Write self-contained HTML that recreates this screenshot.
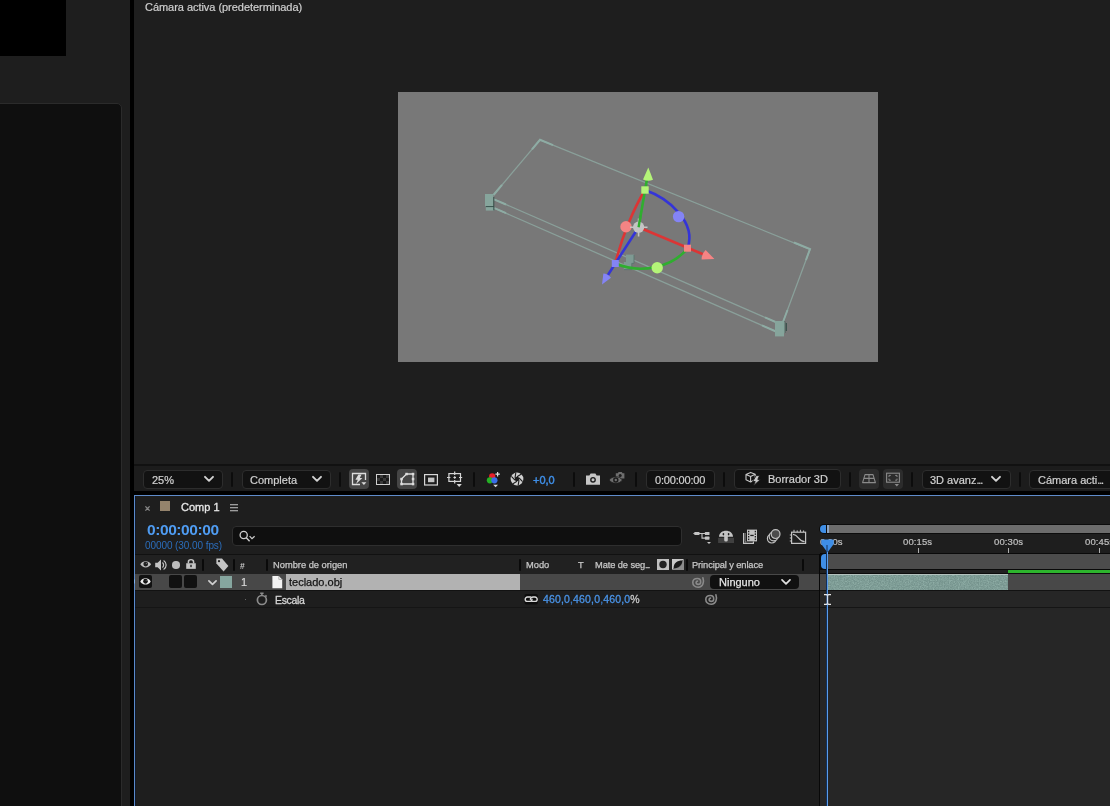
<!DOCTYPE html>
<html lang="es">
<head>
<meta charset="utf-8">
<title>Comp 1</title>
<style>
*{box-sizing:border-box;margin:0;padding:0}
html,body{width:1110px;height:806px;overflow:hidden;background:#1e1e1e}
body{position:relative;font-family:"Liberation Sans",sans-serif;font-size:11px;color:#c8c8c8;-webkit-font-smoothing:antialiased}
.abs{position:absolute}
.t{position:absolute;white-space:nowrap;line-height:1;transform-origin:0 0;will-change:transform}
.sep{position:absolute;width:2px;background:#0c0c0c;border-radius:1px}
.dd{position:absolute;background:#121212;border:1px solid #2d2d2d;border-radius:4px}
svg{position:absolute;overflow:visible}
.tb{font-size:11px;color:#d2d2d2;-webkit-text-stroke:0.2px #d2d2d2}
.dots{letter-spacing:-1.2px}
.hd{font-size:9.3px;color:#c8c8c8;letter-spacing:0;-webkit-text-stroke:0.25px #c8c8c8}
.rl{font-size:9.5px;letter-spacing:0.1px;color:#c0c0c0;-webkit-text-stroke:0.2px #c0c0c0}
</style>
</head>
<body>

<!-- LEFT COLUMN -->
<div class="abs" style="left:0;top:0;width:66px;height:56px;background:#000"></div>
<div class="abs" style="left:-5px;top:103px;width:127px;height:720px;background:#0f0f0f;border:1px solid #2b2b2b;border-radius:5px"></div>
<div class="abs" style="left:130px;top:0;width:4px;height:806px;background:#000"></div>

<!-- VIEWER -->
<div class="t" id="vtitle" style="left:145px;top:2px;font-size:11px;letter-spacing:-0.04px;color:#d0d0d0;-webkit-text-stroke:0.2px #d0d0d0">Cámara activa (predeterminada)</div>
<div class="abs" style="left:398px;top:92px;width:480px;height:270px;background:#787878"></div>

<!--VIEWER-SVG-->
<svg style="left:398px;top:92px" width="480" height="270" viewBox="398 92 480 270">
<!-- bounding box -->
<g fill="none" stroke="#92b0a8" stroke-width="1.3" stroke-opacity="0.7">
<path d="M540 139.8 L810 249.3 L783 322"/>
<path d="M540 139.8 L493.5 195"/>
<path d="M494 199.3 L779 323.5"/>
<path d="M494.5 208.2 L776 331.5"/>
</g>
<g fill="none" stroke="#8eaca4" stroke-width="2" stroke-linecap="butt">
<path d="M553 145.1 L540 139.8 L532 149.4"/>
<path d="M502 184.8 L493.5 195"/>
<path d="M494 199.3 L506 204.5"/>
<path d="M494.5 208.2 L506 213.2"/>
<path d="M794 242.5 L810 249 L806 260"/>
<path d="M787.5 310 L783 322"/>
<path d="M765 317.4 L779 323.5"/>
<path d="M762 325.4 L776 331.5"/>
</g>
<!-- handles -->
<rect x="485" y="194" width="8.4" height="12.4" fill="#86a59c"/>
<rect x="485.8" y="206.4" width="8.4" height="4.2" fill="#86a59c"/>
<path d="M485.8 206.6 H493.8 M493.8 197 V210.4" stroke="#2f4a44" stroke-width="0.9" fill="none"/>
<rect x="775" y="321" width="9" height="15.4" fill="#86a59c"/>
<path d="M784.8 321.6 V333 M786.3 323 V331" stroke="#2f4a44" stroke-width="1" fill="none"/>
<rect x="783.6" y="322" width="1" height="11" fill="#86a59c"/>
<rect x="626" y="254.6" width="8" height="8.8" fill="#7f9a93"/>
<rect x="623.8" y="262" width="8" height="7.6" fill="#7f9a93"/>
<path d="M634 255 V263.4 H631.8 V269.6 H624" fill="none" stroke="#5a746e" stroke-width="0.9"/>

<!-- gizmo arcs -->
<g fill="none" stroke-width="2.6" stroke-linecap="round">
<path d="M645 190 C634 208 622 236 615.3 263.5" stroke="#dc3535"/>
<path d="M645 190 C668 198 697 222 687.5 248.2" stroke="#3434d8"/>
<path d="M615.3 263.5 C640 274 672 268 687.5 248.2" stroke="#2fae2f"/>
<!-- axes -->
<path d="M638.6 227.2 L706 255.5" stroke="#dc3535"/>
<path d="M638.6 227.2 L647.2 178" stroke="#2fae2f"/>
<path d="M638.6 227.2 L606 278" stroke="#3434d8"/>
</g>
<!-- arrow heads -->
<path d="M648.3 167.6 L653 179.8 Q648 182 643 179.4 Z" fill="#b4f478"/>
<path d="M714.4 259 L701.6 259.4 Q701.6 254 705.6 250 Z" fill="#f58484"/>
<path d="M602 284.4 L603.4 273.6 Q607.4 273.6 611 277.8 Z" fill="#8484f5"/>
<!-- squares -->
<rect x="641.3" y="186.3" width="7.4" height="7.4" fill="#b4f478"/>
<rect x="684" y="244.7" width="7" height="7" fill="#f58484"/>
<rect x="611.8" y="260" width="7" height="7" fill="#8484f5"/>
<!-- circles -->
<circle cx="626" cy="226.8" r="5.7" fill="#f58484"/>
<circle cx="678.6" cy="216.6" r="5.7" fill="#8484f5"/>
<circle cx="657.2" cy="267.8" r="5.7" fill="#b4f478"/>
<!-- anchor -->
<circle cx="638.6" cy="227.2" r="5.6" fill="#c4c4c4"/>
<path d="M638.6 218.5 V236.5 M630 227.2 H647.5" stroke="#c4c4c4" stroke-width="1.6"/>
<path d="M638.6 227.2 L640.4 216" stroke="#2fae2f" stroke-width="2.4"/>
</svg>
<!--/VIEWER-SVG-->

<!-- VIEWER TOOLBAR -->
<div class="abs" style="left:134px;top:464px;width:976px;height:2px;background:#111"></div>
<div class="abs" style="left:134px;top:466px;width:976px;height:25px;background:#1c1c1c"></div>
<div class="abs" style="left:134px;top:490.5px;width:976px;height:4.5px;background:#000"></div>
<!--TOOLBAR-->
<div class="dd" style="left:143px;top:470px;width:80px;height:19px"></div>
<div class="t tb" id="t25" style="left:152px;top:474.7px">25%</div>
<svg style="left:204px;top:476px" width="10" height="6" viewBox="0 0 10 6"><path d="M1 0.8 L5 4.8 L9 0.8" fill="none" stroke="#d4d4d4" stroke-width="1.9" stroke-linecap="round" stroke-linejoin="round"/></svg>
<div class="sep" style="left:231px;top:472px;height:15px"></div>
<div class="dd" style="left:242px;top:470px;width:89px;height:19px"></div>
<div class="t tb" id="tcomp" style="left:250px;top:474.7px">Completa</div>
<svg style="left:312px;top:476px" width="10" height="6" viewBox="0 0 10 6"><path d="M1 0.8 L5 4.8 L9 0.8" fill="none" stroke="#d4d4d4" stroke-width="1.9" stroke-linecap="round" stroke-linejoin="round"/></svg>
<div class="sep" style="left:339px;top:472px;height:15px"></div>

<!-- fast preview -->
<div class="abs" style="left:349px;top:469px;width:20px;height:20px;background:#454545;border-radius:4px"></div>
<svg style="left:349px;top:469px" width="20" height="20" viewBox="0 0 20 20"><path d="M16.5 11 V4.5 H3.5 V15.5 H11" fill="none" stroke="#dcdcdc" stroke-width="1.3"/><path d="M9.4 5.6 H12.6 L10.8 9 H13.4 L7 15 L8.8 10.8 H6.4 Z" fill="#dcdcdc"/><path d="M12.4 13.2 H17.4 L14.9 16 Z" fill="#dcdcdc"/></svg>
<!-- transparency grid -->
<svg style="left:376px;top:474px" width="14" height="11" viewBox="0 0 14 11"><rect x="0.5" y="0.5" width="13" height="10" fill="#3a3a3a" stroke="#d0d0d0" stroke-width="1"/><g fill="#1a1a1a"><rect x="1" y="1" width="3" height="3"/><rect x="7" y="1" width="3" height="3"/><rect x="4" y="4" width="3" height="3"/><rect x="10" y="4" width="3" height="3"/><rect x="1" y="7" width="3" height="3"/><rect x="7" y="7" width="3" height="3"/></g></svg>
<!-- mask path -->
<div class="abs" style="left:397px;top:469px;width:20px;height:20px;background:#454545;border-radius:4px"></div>
<svg style="left:397px;top:469px" width="20" height="20" viewBox="0 0 20 20"><path d="M9.5 5 H16 V15 H4.5 V10 Z" fill="none" stroke="#dcdcdc" stroke-width="1.3" stroke-linejoin="round"/><g fill="#dcdcdc"><rect x="8.3" y="3.8" width="2.5" height="2.5"/><rect x="14.8" y="3.8" width="2.5" height="2.5"/><rect x="14.8" y="8.8" width="2.5" height="2.5"/><rect x="14.8" y="13.8" width="2.5" height="2.5"/><rect x="3.3" y="13.8" width="2.5" height="2.5"/><rect x="3.3" y="8.8" width="2.5" height="2.5"/></g></svg>
<!-- region of interest -->
<svg style="left:424px;top:474px" width="14" height="12" viewBox="0 0 14 12"><rect x="0.6" y="0.6" width="12.8" height="10.4" fill="none" stroke="#d6d6d6" stroke-width="1.2"/><rect x="4" y="3.6" width="6.4" height="4.6" fill="#c4c4c4"/></svg>
<!-- grid & guides -->
<svg style="left:446px;top:471px" width="17" height="17" viewBox="0 0 17 17"><rect x="2.9" y="2.6" width="11.6" height="7.8" fill="none" stroke="#d6d6d6" stroke-width="1.2"/><path d="M8.7 0.4 V4 M8.7 9 V12.4 M1 6.5 H4.4 M13 6.5 H16.2 M7.4 6.5 H10 M8.7 5.2 V7.8" stroke="#d6d6d6" stroke-width="1.2" fill="none"/><path d="M10.6 13 H15.8 L13.2 16 Z" fill="#d6d6d6"/></svg>
<div class="sep" style="left:473px;top:472px;height:15px"></div>

<!-- RGB channels -->
<svg style="left:486px;top:471px" width="16" height="17" viewBox="0 0 16 17"><circle cx="6.2" cy="5.4" r="3.1" fill="#e8202a"/><circle cx="3.9" cy="9.3" r="3.1" fill="#25b025"/><circle cx="8.4" cy="9.3" r="3.1" fill="#3a6ee8"/><path d="M11.6 1 V5.4 M9.4 3.2 H13.8" stroke="#e0e0e0" stroke-width="1.2"/><path d="M7.2 13.7 H12 L9.6 16.2 Z" fill="#d6d6d6"/></svg>
<!-- aperture -->
<svg style="left:510px;top:472px" width="14" height="14" viewBox="0 0 14 14"><circle cx="7" cy="7" r="6.4" fill="#cfcfcf"/><circle cx="7" cy="7" r="2.3" fill="#1c1c1c"/><g stroke="#1c1c1c" stroke-width="1.1"><path d="M7 4.7 L11.5 2"/><path d="M9 5.85 L12.6 9.6"/><path d="M9 8.15 L8.2 13.2"/><path d="M7 9.3 L2.5 12"/><path d="M5 8.15 L1.4 4.4"/><path d="M5 5.85 L5.8 0.8"/></g></svg>
<div class="t" id="tplus" style="left:533px;top:474.7px;color:#3f8ee6;font-size:11px;-webkit-text-stroke:0.45px #3f8ee6">+0,0</div>
<div class="sep" style="left:573px;top:472px;height:15px"></div>

<!-- camera snapshot -->
<svg style="left:586px;top:473px" width="14" height="12" viewBox="0 0 14 12"><path d="M0 2.6 H3.4 L4.6 0.6 H9.4 L10.6 2.6 H14 V11.8 H0 Z" fill="#c6c6c6"/><circle cx="7" cy="6.8" r="2.9" fill="#1c1c1c"/><circle cx="7" cy="6.8" r="1.5" fill="#c6c6c6"/></svg>
<!-- show snapshot -->
<svg style="left:609px;top:471px" width="16" height="15" viewBox="0 0 16 15"><path d="M6.8 2.2 H8.8 L9.6 1 H12.8 L13.6 2.2 H15.4 V7.6 H6.8 Z" fill="#6e6e6e"/><circle cx="11.2" cy="4.6" r="1.5" fill="#1c1c1c"/><path d="M0.2 9 C3 4.6 10.6 4.6 13.4 9 C10.6 13.4 3 13.4 0.2 9 Z" fill="#6e6e6e" stroke="#1c1c1c" stroke-width="0.8"/><circle cx="6.8" cy="9" r="2.7" fill="#1c1c1c"/><circle cx="6.8" cy="9" r="1.2" fill="#6e6e6e"/></svg>
<div class="sep" style="left:635px;top:472px;height:15px"></div>

<div class="dd" style="left:646px;top:470px;width:69px;height:19px"></div>
<div class="t tb" id="ttime" style="letter-spacing:-0.18px;left:655px;top:474.7px">0:00:00:00</div>
<div class="sep" style="left:723px;top:472px;height:15px"></div>

<div class="dd" style="left:733.5px;top:469px;width:107px;height:19.6px"></div>
<svg style="left:745px;top:471px" width="17" height="16" viewBox="0 0 17 16"><path d="M5.6 1.4 L10.2 3.2 V8.4 L5.6 11 L1 8.8 V3.4 Z M1 3.4 L5.6 5.4 L10.2 3.2 M5.6 5.4 V11" fill="none" stroke="#c8c8c8" stroke-width="1.1" stroke-linejoin="round"/><path d="M11.2 4.6 H14.6 L12.8 8.4 H15.6 L8.2 15 L10.2 10.6 H7.6 Z" fill="#c8c8c8" stroke="#121212" stroke-width="0.9"/></svg>
<div class="t tb" id="tborr" style="left:768px;top:474.1px">Borrador 3D</div>
<div class="sep" style="left:849px;top:472px;height:15px"></div>

<div class="abs" style="left:859px;top:469px;width:20px;height:20px;background:#2c2c2c;border-radius:4px"></div>
<svg style="left:859px;top:469px" width="20" height="20" viewBox="0 0 20 20"><path d="M6 5.6 H14 L16.4 13.6 H3.6 Z M10 5.6 V13.6 M4.8 9.4 H15.2" fill="none" stroke="#8a8a8a" stroke-width="1.1" stroke-linejoin="round"/></svg>
<div class="abs" style="left:883px;top:469px;width:20px;height:20px;background:#2c2c2c;border-radius:4px"></div>
<svg style="left:883px;top:469px" width="20" height="20" viewBox="0 0 20 20"><rect x="3.6" y="4.2" width="12.8" height="9" fill="none" stroke="#8a8a8a" stroke-width="1.1"/><path d="M6 8 V6.4 H7.8 M12.2 6.4 H14 V8 M14 9.6 V11.2 H12.2 M7.8 11.2 H6 V9.6" fill="none" stroke="#8a8a8a" stroke-width="1"/><path d="M11.6 15 H16 L13.8 17.4 Z" fill="#8a8a8a"/></svg>
<div class="sep" style="left:911px;top:472px;height:15px"></div>

<div class="dd" style="left:922px;top:470px;width:89px;height:19px"></div>
<div class="t tb" id="t3d" style="left:930px;top:474.7px">3D avanz<span class="dots">...</span></div>
<svg style="left:991px;top:476px" width="10" height="6" viewBox="0 0 10 6"><path d="M1 0.8 L5 4.8 L9 0.8" fill="none" stroke="#d4d4d4" stroke-width="1.9" stroke-linecap="round" stroke-linejoin="round"/></svg>
<div class="sep" style="left:1019px;top:472px;height:15px"></div>
<div class="dd" style="left:1029px;top:470px;width:100px;height:19px"></div>
<div class="t tb" id="tcam" style="left:1038px;top:474.7px">Cámara acti<span class="dots">...</span></div>
<!--/TOOLBAR-->

<!-- TIMELINE PANEL -->
<div class="abs" style="left:134px;top:495px;width:990px;height:320px;background:#1e1e1e;border:1px solid #5b8acb;border-top-color:#5f8ccb"></div>
<div class="abs" style="left:135px;top:496px;width:1px;height:310px;background:#101a2c"></div>
<svg style="left:134px;top:579px" width="3" height="5" viewBox="0 0 3 5"><path d="M0 0 L2.4 2.5 L0 5 Z" fill="#7fb0ea"/></svg>
<!--TIMELINE-->
<!-- tab -->
<svg style="left:145px;top:505.5px" width="5" height="5" viewBox="0 0 5 5"><path d="M0.4 0.4 L4.6 4.6 M4.6 0.4 L0.4 4.6" stroke="#868686" stroke-width="1.3"/></svg>
<div class="abs" style="left:160px;top:501px;width:10px;height:10px;background:#94836c"></div>
<div class="t" id="tcompname" style="left:181px;top:502px;font-size:11px;color:#e8e8e8;-webkit-text-stroke:0.3px #e8e8e8">Comp 1</div>
<svg style="left:230px;top:504px" width="8" height="8" viewBox="0 0 8 8"><path d="M0 0.7 H8 M0 3.7 H8 M0 6.7 H8" stroke="#c8c8c8" stroke-width="1.1"/></svg>

<!-- timecode -->
<div class="t" id="tcode" style="left:147px;top:522px;font-size:15.5px;letter-spacing:-0.42px;font-weight:bold;color:#4f9cf2">0:00:00:00</div>
<div class="t" id="tfps" style="left:145px;top:541.2px;font-size:10px;color:#2b6dbb;letter-spacing:-0.08px">00000 (30.00 fps)</div>

<!-- search -->
<div class="abs" style="left:232px;top:526px;width:450px;height:19.6px;background:#0f0f0f;border:1px solid #2e2e2e;border-radius:4px"></div>
<svg style="left:239px;top:530px" width="16" height="12" viewBox="0 0 16 12"><circle cx="4.7" cy="5" r="3.6" fill="none" stroke="#cfcfcf" stroke-width="1.3"/><path d="M7.3 7.8 L10.6 11.2" stroke="#cfcfcf" stroke-width="1.4"/><path d="M10.6 6.2 L13 8.6 L15.6 6.2" fill="none" stroke="#cfcfcf" stroke-width="1.2"/></svg>

<!-- switches icons -->
<svg style="left:693px;top:530px" width="19" height="15" viewBox="693 530 19 15"><path d="M699 533.5 H705 M702 533.5 V538.1 H705" fill="none" stroke="#c4c4c4" stroke-width="1.1"/><g fill="#c4c4c4"><rect x="694.2" y="532" width="5.4" height="3" rx="0.8"/><rect x="693.4" y="533" width="1.4" height="1"/><rect x="704.9" y="532" width="4.6" height="3.1" rx="0.6"/><rect x="704.9" y="536.6" width="4.6" height="3.1" rx="0.6"/><path d="M707 541.9 H711 L709 544.1 Z"/></g></svg>
<svg style="left:718px;top:530px" width="16" height="14" viewBox="718 530 16 14"><rect x="718.1" y="537.8" width="15.9" height="5.2" fill="#404040"/><path d="M719 536.8 C719 528.6 733 528.6 733 536.8 Z" fill="#c4c4c4"/><rect x="724.2" y="534" width="3.6" height="7.6" rx="1.6" fill="#c4c4c4"/><rect x="722.6" y="533" width="1.6" height="2.4" rx="0.8" fill="#1e1e1e"/><rect x="727.8" y="533" width="1.6" height="2.4" rx="0.8" fill="#1e1e1e"/></svg>
<svg style="left:743px;top:529px" width="15" height="15" viewBox="743 529 15 15"><path d="M743.6 533 V543.4 H753.4 V541.6" fill="none" stroke="#c4c4c4" stroke-width="1.2"/><path d="M745.2 533.4 V541.6 M745.2 541.9 H747" fill="none" stroke="#c4c4c4" stroke-width="1" stroke-dasharray="1.2 0.8"/><rect x="747" y="529.6" width="10" height="11.8" fill="#c4c4c4"/><g fill="#1e1e1e"><rect x="748" y="530.8" width="1.3" height="1.5"/><rect x="748" y="533.4" width="1.3" height="1.5"/><rect x="748" y="536" width="1.3" height="1.5"/><rect x="748" y="538.6" width="1.3" height="1.5"/><rect x="754.7" y="530.8" width="1.3" height="1.5"/><rect x="754.7" y="533.4" width="1.3" height="1.5"/><rect x="754.7" y="536" width="1.3" height="1.5"/><rect x="754.7" y="538.6" width="1.3" height="1.5"/><rect x="750.3" y="534.8" width="3.4" height="1.3"/></g></svg>
<svg style="left:766px;top:528px" width="16" height="17" viewBox="766 528 16 17"><g stroke="#c0c0c0" stroke-width="1.2"><circle cx="771.8" cy="538.6" r="4.4" fill="#1e1e1e"/><circle cx="773.6" cy="536.4" r="4.4" fill="#1e1e1e"/><circle cx="775.6" cy="534.1" r="4.4" fill="#4c4c4c"/></g></svg>
<svg style="left:789px;top:529px" width="18" height="16" viewBox="789 529 18 16"><rect x="791.6" y="532.2" width="14" height="11.2" fill="none" stroke="#c4c4c4" stroke-width="1.2"/><path d="M793 534.4 C798.4 534.4 798.4 541.4 804.6 541.6" fill="none" stroke="#c4c4c4" stroke-width="1.2"/><path d="M794 529.8 V532 M797.2 530.4 V532 M800.4 529.8 V532 M803.6 530.4 V532 M789.8 535 H791.4 M789.8 538 H791.4 M789.8 541 H791.4" stroke="#c4c4c4" stroke-width="1"/></svg>

<!-- column header -->
<div class="abs" style="left:135px;top:554px;width:685px;height:1px;background:#111"></div>
<div class="abs" style="left:135px;top:555px;width:685px;height:19px;background:#212121"></div>
<svg style="left:140.4px;top:560.2px" width="11.4" height="8.6" viewBox="0 0 12 9" preserveAspectRatio="none"><path d="M0.3 4.5 C2.6 0.2 9.4 0.2 11.7 4.5 C9.4 8.8 2.6 8.8 0.3 4.5 Z" fill="#bebebe"/><circle cx="6" cy="4.3" r="2.5" fill="#212121"/><circle cx="6.8" cy="3.6" r="0.7" fill="#666"/></svg>
<svg style="left:155px;top:559px" width="13" height="12" viewBox="0 0 13 12"><path d="M0.2 3.8 H2.6 L6 0.6 V11.4 L2.6 8.2 H0.2 Z" fill="#c4c4c4"/><path d="M7.4 3.4 C9 4.6 9 7.4 7.4 8.6 M8.6 1.4 C12 3.6 12 8.4 8.6 10.6" fill="none" stroke="#c4c4c4" stroke-width="1.2"/></svg>
<div class="abs" style="left:172.2px;top:561px;width:7.5px;height:7.5px;background:#bcbcbc;border-radius:50%"></div>
<svg style="left:186px;top:559px" width="10" height="10.2" viewBox="0 0 10 12" preserveAspectRatio="none"><path d="M2.4 5.4 V3.4 C2.4 0 7.6 0 7.6 3.4 V5.4" fill="none" stroke="#c4c4c4" stroke-width="1.5"/><rect x="0.2" y="5" width="9.6" height="6.6" fill="#c4c4c4"/><rect x="4.3" y="6.8" width="1.4" height="2.8" fill="#212121"/></svg>
<div class="sep" style="left:202px;top:559px;height:12px;background:#0a0a0a"></div>
<svg style="left:216px;top:558px" width="13" height="14" viewBox="0 0 13 14"><path d="M0.4 0.6 H6 L12.4 8 L7.6 13.4 L0.4 5.6 Z" fill="#c4c4c4"/><circle cx="3" cy="3.2" r="1.1" fill="#212121"/></svg>
<div class="sep" style="left:233px;top:559px;height:12px;background:#0a0a0a"></div>
<div class="t hd" id="hnum" style="left:240px;top:562px;font-size:8.5px;font-weight:bold;-webkit-text-stroke:0">#</div>
<div class="sep" style="left:266px;top:559px;height:12px;background:#0a0a0a"></div>
<div class="t hd" id="hnombre" style="left:273px;top:560.8px">Nombre de origen</div>
<div class="sep" style="left:519px;top:559px;height:12px;background:#0a0a0a"></div>
<div class="t hd" id="hmodo" style="left:526px;top:560.8px">Modo</div>
<div class="t hd" id="hT" style="left:578px;top:560.8px">T</div>
<div class="t hd" id="hmate" style="letter-spacing:-0.1px;left:595px;top:560.8px">Mate de seg<span class="dots">...</span></div>
<svg style="left:657px;top:559px" width="12" height="11" viewBox="0 0 12 11"><rect width="12" height="11" fill="#c0c0c0"/><circle cx="6" cy="5.5" r="3.7" fill="#212121"/></svg>
<svg style="left:672px;top:559px" width="12" height="11" viewBox="0 0 12 11"><path d="M0 0 H12 L0 11 Z" fill="#c8c8c8"/><path d="M12 0 V11 H0 Z" fill="#8c8c8c"/><path d="M1.6 9.4 C1.6 4 5 1.6 10.4 1.6 C10.4 6.6 7 9.4 1.6 9.4 Z" fill="#181818"/><path d="M3.4 9.2 C7.4 8.6 9.8 6 10.4 2.4 L10.4 1.6 C10.4 6.6 7 9.4 1.6 9.4 Z" fill="#b0b0b0"/></svg>
<div class="sep" style="left:686px;top:559px;height:12px;background:#0a0a0a"></div>
<div class="t hd" id="hprinc" style="letter-spacing:-0.1px;left:692px;top:560.8px">Principal y enlace</div>
<div class="sep" style="left:802px;top:559px;height:12px;background:#0a0a0a"></div>

<!-- layer row -->
<div class="abs" style="left:135px;top:574px;width:685px;height:17px;background:#484848"></div>
<div class="abs" style="left:139px;top:575px;width:13px;height:13px;background:#111;border-radius:2px"></div>
<svg style="left:140.2px;top:577.2px" width="11" height="8.8" viewBox="0 0 12 9" preserveAspectRatio="none"><path d="M0.3 4.5 C2.6 0.2 9.4 0.2 11.7 4.5 C9.4 8.8 2.6 8.8 0.3 4.5 Z" fill="#ececec"/><circle cx="6" cy="4.3" r="2.5" fill="#151515"/><circle cx="6.8" cy="3.6" r="0.7" fill="#555"/></svg>
<div class="abs" style="left:169px;top:575px;width:12.7px;height:13px;background:#111;border-radius:2px"></div>
<div class="abs" style="left:184px;top:575px;width:12.6px;height:13px;background:#111;border-radius:2px"></div>
<svg style="left:208px;top:580px" width="9" height="6" viewBox="0 0 9 6"><path d="M0.9 0.8 L4.5 4.4 L8.1 0.8" fill="none" stroke="#d0d0d0" stroke-width="1.7" stroke-linecap="round" stroke-linejoin="round"/></svg>
<div class="abs" style="left:220px;top:576px;width:12px;height:12px;background:#86a69f"></div>
<div class="t" id="lnum" style="left:241px;top:577px;font-size:11px;color:#d8d8d8;-webkit-text-stroke:0.2px #d8d8d8">1</div>
<svg style="left:272px;top:576px" width="11" height="13" viewBox="0 0 11 13"><path d="M0.4 0 H6.8 L10.2 3.4 V12.3 H0.4 Z" fill="#f4f4f4"/><path d="M6.8 0 V3.4 H10.2" fill="none" stroke="#a8a8a8" stroke-width="0.8"/></svg>
<div class="abs" style="left:286px;top:574px;width:234px;height:17px;background:#b2b2b2"></div>
<div class="t" id="lname" style="left:289px;top:577px;font-size:11px;color:#141414;-webkit-text-stroke:0.25px #141414">teclado.obj</div>
<svg class="spiral" style="left:692px;top:576.5px" width="12" height="11" viewBox="0 0 12 11"><path d="M10.9 0.7 C12.2 4.4 11.4 10.2 6.2 10.2 C2.6 10.2 0.8 7.8 0.8 5.5 C0.8 2.8 3 1.5 5.4 1.5 C7.6 1.5 8.7 3 8.7 4.9 C8.7 6.5 7.6 7.4 6.2 7.4 C4.9 7.4 4.1 6.5 4.1 5.5 C4.1 4.6 4.8 4.1 5.6 4.1" fill="none" stroke="#8a8a8a" stroke-width="1.6" stroke-linecap="round"/></svg>
<div class="abs" style="left:710px;top:575px;width:89px;height:13.6px;background:#101010;border-radius:4px"></div>
<div class="t" id="lning" style="left:719px;top:577.3px;font-size:11px;color:#e4e4e4;-webkit-text-stroke:0.25px #e4e4e4">Ninguno</div>
<svg style="left:781px;top:579px" width="10" height="6" viewBox="0 0 10 6"><path d="M1 0.8 L5 4.8 L9 0.8" fill="none" stroke="#e0e0e0" stroke-width="1.7" stroke-linecap="round" stroke-linejoin="round"/></svg>
<div class="abs" style="left:135px;top:590px;width:975px;height:1px;background:#121212"></div>

<!-- property row -->
<div class="abs" style="left:245px;top:599px;width:1px;height:1px;background:#666"></div>
<svg style="left:256px;top:592px" width="12" height="14" viewBox="0 0 12 14"><circle cx="5.9" cy="8" r="4.5" fill="none" stroke="#8c8c8c" stroke-width="1.7"/><path d="M4.2 1.2 H7.6 M5.9 1.2 V3.2 M9.4 3.4 L10.6 4.6" stroke="#8c8c8c" stroke-width="1.5" fill="none"/></svg>
<div class="t" id="pesc" style="left:274.5px;top:595px;font-size:10.5px;letter-spacing:-0.35px;color:#d4d4d4;-webkit-text-stroke:0.3px #d4d4d4">Escala</div>
<svg style="left:524px;top:594px" width="15" height="11" viewBox="0 0 15 11"><rect x="0.5" y="0" width="13.4" height="10.6" rx="2" fill="#0c0c0c"/><path d="M6.6 3 H3.4 A2.2 2.2 0 0 0 3.4 7.4 H5.4 C7 7.4 8 6.4 8 5.2" fill="none" stroke="#dadada" stroke-width="1.4" stroke-linecap="round"/><path d="M7.8 7.4 H11 A2.2 2.2 0 0 0 11 3 H9 C7.4 3 6.4 4 6.4 5.2" fill="none" stroke="#dadada" stroke-width="1.4" stroke-linecap="round"/></svg>
<div class="t" id="pval" style="left:543px;top:594px;font-size:10.5px;letter-spacing:0.15px;color:#4a94e8;-webkit-text-stroke:0.3px">460,0<span style="color:#3a78c0">,</span>460,0<span style="color:#3a78c0">,</span>460,0<span style="color:#c8c8c8">%</span></div>
<svg class="spiral" style="left:705px;top:593.5px" width="12" height="11" viewBox="0 0 12 11"><path d="M10.9 0.7 C12.2 4.4 11.4 10.2 6.2 10.2 C2.6 10.2 0.8 7.8 0.8 5.5 C0.8 2.8 3 1.5 5.4 1.5 C7.6 1.5 8.7 3 8.7 4.9 C8.7 6.5 7.6 7.4 6.2 7.4 C4.9 7.4 4.1 6.5 4.1 5.5 C4.1 4.6 4.8 4.1 5.6 4.1" fill="none" stroke="#8a8a8a" stroke-width="1.6" stroke-linecap="round"/></svg>
<div class="abs" style="left:135px;top:607px;width:975px;height:1px;background:#151515"></div>

<!-- right: time ruler -->
<div class="abs" style="left:820px;top:574px;width:290px;height:232px;background:#262626"></div>
<div class="abs" style="left:819px;top:554px;width:1px;height:252px;background:#080808"></div>
<div class="abs" style="left:819px;top:524px;width:291px;height:10px;background:#0c0c0c;border-radius:5px 0 0 5px"></div>
<div class="abs" style="left:827px;top:525px;width:283px;height:8px;background:#6c6c6c"></div>
<div class="abs" style="left:827px;top:525px;width:2px;height:8px;background:#8fa6c4"></div>
<div class="abs" style="left:820px;top:525px;width:6px;height:8px;background:#3f8ee6;border-radius:4px 0 0 4px"></div>
<div class="t rl" id="r0" style="left:820px;top:537.4px;letter-spacing:-0.2px">0:00s</div>
<div class="t rl" id="r15" style="left:903px;top:537.4px">00:15s</div>
<div class="t rl" id="r30" style="left:994px;top:537.4px">00:30s</div>
<div class="t rl" id="r45" style="left:1085px;top:537.4px">00:45s</div>
<div class="abs" style="left:918px;top:548px;width:1px;height:5px;background:#b0b0b0"></div>
<div class="abs" style="left:1008px;top:548px;width:1px;height:5px;background:#b0b0b0"></div>
<div class="abs" style="left:1099px;top:548px;width:1px;height:5px;background:#b0b0b0"></div>
<div class="abs" style="left:820px;top:553px;width:290px;height:1px;background:#0a0a0a"></div>
<div class="abs" style="left:820px;top:554px;width:290px;height:15px;background:#4c4c4c"></div>
<div class="abs" style="left:820px;top:554px;width:7px;height:15px;background:#0c0c0c"></div>
<div class="abs" style="left:821px;top:554px;width:6px;height:15px;background:#3f8ee6;border-radius:4px 0 0 4px"></div>
<div class="abs" style="left:820px;top:569px;width:290px;height:1px;background:#0a0a0a"></div>
<div class="abs" style="left:820px;top:570px;width:290px;height:4px;background:#212121"></div>
<div class="abs" style="left:820px;top:573px;width:290px;height:1px;background:#0c0c0c"></div>
<div class="abs" style="left:1008px;top:570px;width:102px;height:3px;background:#2db52d"></div>
<!-- layer bar -->
<div class="abs" style="left:820px;top:574px;width:290px;height:17px;background:#484848"></div>
<svg style="left:827px;top:574px" width="181" height="16" viewBox="0 0 181 16"><defs><filter id="nz" x="0" y="0" width="100%" height="100%" color-interpolation-filters="sRGB"><feTurbulence type="fractalNoise" baseFrequency="0.8" numOctaves="2" seed="3" result="n"/><feColorMatrix in="n" type="matrix" values="0 0 0 0 0.56  0 0 0 0 0.68  0 0 0 0 0.65  1.2 1.2 1.2 0 -1.4"/><feComposite operator="in" in2="SourceGraphic"/></filter></defs><rect width="181" height="16" fill="#75938d"/><rect width="181" height="16" fill="#8aa8a0" filter="url(#nz)"/><rect width="181" height="1" fill="#b4c2be"/></svg>
<div class="abs" style="left:820px;top:590px;width:290px;height:1px;background:#121212"></div>
<div class="abs" style="left:820px;top:607px;width:290px;height:1px;background:#151515"></div>
<!-- playhead -->
<div class="abs" style="left:826px;top:548px;width:1px;height:258px;background:#12305a"></div>
<div class="abs" style="left:827px;top:548px;width:1px;height:258px;background:#5a9cea"></div>
<svg style="left:821px;top:539px" width="13" height="14" viewBox="0 0 13 14"><path d="M0.3 1.6 Q0.3 0.6 1.3 0.6 H11.7 Q12.7 0.6 12.7 1.6 V5 L6.5 13.4 L0.3 5 Z" fill="#3f8ee6"/><path d="M6 6 V13" stroke="#12305a" stroke-width="1"/></svg>
<!-- I-beam -->
<svg style="left:824px;top:594px" width="7" height="11" viewBox="0 0 7 11"><path d="M0 0.6 H2.4 L3.5 1.2 L4.6 0.6 H7 M0 10.4 H2.4 L3.5 9.8 L4.6 10.4 H7" fill="none" stroke="#e8e8e8" stroke-width="1.2"/><path d="M3.5 1.2 V9.8" stroke="#cfe0f6" stroke-width="1.4"/></svg>
<!--/TIMELINE-->

</body>
</html>
